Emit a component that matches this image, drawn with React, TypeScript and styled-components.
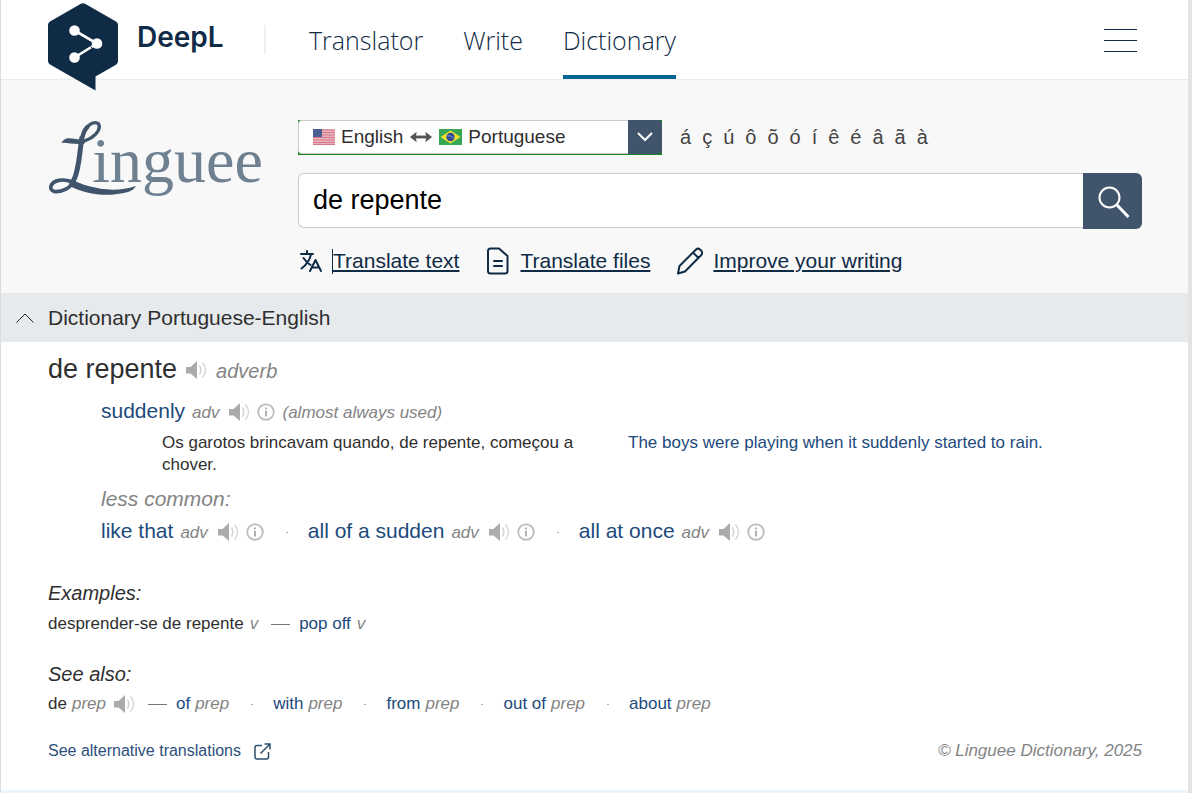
import React from "react";
import styled, { createGlobalStyle } from "styled-components";

const navy = "#0f2b46";
const slate = "#40556b";
const linkBlue = "#1c4a7c";
const grey = "#848484";
const ink = "#2f2f2f";

const GlobalStyle = createGlobalStyle`
  *, *::before, *::after { box-sizing: border-box; }
  body {
    margin: 0;
    background: #e3e3e3;
    color: ${ink};
    font-family: "Liberation Sans", Arial, sans-serif;
    font-size: 17px;
    line-height: 22px;
  }
  a { color: inherit; text-decoration: none; }
  h1, h2, h3, p, ul { margin: 0; padding: 0; font-weight: 400; }
  button { border: 0; padding: 0; background: none; color: inherit; font: inherit; cursor: pointer; }
  svg { display: block; flex: none; }
`;

const Page = styled.div`
  display: flex;
  flex-direction: column;
  min-height: 100vh;
  margin-right: 4px;
  background: #fff;
  border-left: 1px solid #dcdcdc;
`;

const Header = styled.header`
  display: flex;
  height: 80px;
  padding: 0 51px 0 47px;
  border-bottom: 1px solid #ececec;
`;

const Brand = styled.a`
  display: flex;
  align-items: flex-start;
  gap: 19px;
  width: 216px;
  color: ${navy};
`;

const BrandMark = styled.svg`
  position: relative;
  z-index: 1;
  margin-top: 3px;
`;

const BrandName = styled.span`
  padding-top: 20px;
  font: 600 28px/34px Inter, sans-serif;
`;

const Divider = styled.span`
  width: 2px;
  height: 29px;
  margin-top: 25px;
  background: #f0f0f0;
`;

const Nav = styled.nav`
  display: flex;
  flex: 1;
  gap: 40px;
  margin-left: 43px;
`;

const NavLink = styled.a<{ $active?: boolean }>`
  height: 79px;
  padding-top: 23px;
  border-bottom: 4px solid ${(p) => (p.$active ? "#006494" : "transparent")};
  color: ${navy};
  font: 300 25px/34px "Open Sans", sans-serif;
`;

const MenuButton = styled.button`
  display: flex;
  flex-direction: column;
  align-self: flex-start;
  gap: 10px;
  width: 33px;
  margin-top: 29px;
`;

const MenuBar = styled.span`
  height: 1px;
  width: 100%;
  background: ${navy};
`;

const SearchArea = styled.section`
  display: grid;
  grid-template-columns: 214px 1fr;
  column-gap: 36px;
  padding: 40px 46px 18px 47px;
  background: #f8f8f8;
`;

const SearchColumn = styled.form`
  display: flex;
  flex-direction: column;
  min-width: 0;
`;

const LanguageRow = styled.div`
  display: flex;
  align-items: center;
  gap: 18px;
`;

const LanguagePicker = styled.label`
  position: relative;
  display: flex;
  width: 364px;
  height: 35px;
  padding-bottom: 1px;
  background: #14871a;
`;

const LanguageValue = styled.span`
  display: flex;
  flex: 1;
  align-items: center;
  gap: 6px;
  padding-left: 14px;
  border: 1px solid #ccc;
  border-right: 0;
  border-radius: 4px 0 0 4px;
  background: #fff;
  font-size: 19px;
`;

const LanguageArrow = styled.span`
  display: grid;
  place-items: center;
  width: 34px;
  border-radius: 0 4px 4px 0;
  background: ${slate};
`;

const LanguageSelect = styled.select`
  position: absolute;
  inset: 0;
  width: 100%;
  opacity: 0;
  cursor: pointer;
`;

const AccentKeys = styled.div`
  display: flex;
  gap: 11px;
  padding-bottom: 2px;
  color: #444;
  font-size: 20px;
`;

const SearchRow = styled.div`
  display: flex;
  margin-top: 18px;
`;

const SearchInput = styled.input`
  flex: 1;
  min-width: 0;
  height: 55px;
  padding: 0 14px;
  border: 1px solid #ccc;
  border-right: 0;
  border-radius: 6px 0 0 6px;
  background: #fff;
  color: #000;
  font: 27px/34px "Liberation Sans", Arial, sans-serif;
  outline: 0;
`;

const SearchButton = styled.button`
  display: grid;
  place-items: center;
  width: 59px;
  height: 56px;
  padding: 2px 0 0 2px;
  border-radius: 0 6px 6px 0;
  background: ${slate};
`;

const ToolLinks = styled.nav`
  display: flex;
  gap: 27px;
  margin-top: 18px;
  color: ${navy};
  font-size: 21px;
  line-height: 28px;
`;

const ToolLink = styled.a`
  display: flex;
  align-items: center;
  gap: 9px;
`;

const ToolLabel = styled.span<{ $caret?: boolean }>`
  padding-bottom: 1px;
  line-height: 24px;
  border-left: 1px solid ${(p) => (p.$caret ? navy : "transparent")};
  text-decoration: underline;
  text-decoration-thickness: 2px;
  text-underline-offset: 2px;
`;

const SectionBar = styled.h2`
  display: flex;
  align-items: center;
  gap: 14px;
  height: 49px;
  padding-left: 15px;
  background: #e7eaed;
  font-size: 21px;
`;

const Content = styled.main`
  flex: 1;
  padding: 10px 46px 28px 47px;
`;

const Line = styled.div<{ $size?: number; $height?: number; $top?: number }>`
  display: flex;
  flex-wrap: wrap;
  align-items: baseline;
  margin-top: ${(p) => p.$top ?? 0}px;
  font-size: ${(p) => p.$size ?? 17}px;
  line-height: ${(p) => p.$height ?? 22}px;
`;

const Translations = styled.div`
  padding-left: 53px;
`;

const Headword = styled.h1`
  font-size: 27px;
`;

const WordType = styled.em<{ $size?: number }>`
  color: ${grey};
  font-size: ${(p) => p.$size ?? 17}px;
`;

const Entry = styled.span<{ $gap?: number }>`
  display: inline-flex;
  align-items: baseline;
  gap: ${(p) => p.$gap ?? 7}px;
`;

const WordLink = styled.a<{ $source?: boolean }>`
  color: ${(p) => (p.$source ? ink : linkBlue)};
`;

const IconButton = styled.button<{ $spaced?: boolean }>`
  align-self: center;
  margin: 0 0 0 ${(p) => (p.$spaced ? 3 : 0)}px;
`;

const Examples = styled.div`
  display: grid;
  grid-template-columns: 446fr 514fr;
  column-gap: 20px;
  margin-top: 6px;
  padding-left: 61px;
`;

const Example = styled.p<{ $translated?: boolean }>`
  color: ${(p) => (p.$translated ? linkBlue : ink)};
`;

const SubHeading = styled.h3<{ $top: number }>`
  margin-top: ${(p) => p.$top}px;
  font-size: 20px;
  font-style: italic;
  line-height: 24px;
`;

const LessCommon = styled.h3`
  margin-top: 10px;
  color: ${grey};
  font-size: 21px;
  font-style: italic;
  line-height: 26px;
`;

const Dot = styled.span`
  width: 2px;
  height: 1px;
  margin: 0 20px 0 22px;
  align-self: center;
  background: #aaa;
`;

const Dash = styled.span`
  width: 19px;
  height: 1px;
  margin: 0 9px 0 13px;
  align-self: center;
  background: #777;
`;

const Foot = styled.footer`
  display: flex;
  justify-content: space-between;
  margin-top: 25px;
`;

const AltLink = styled.a`
  display: flex;
  align-items: center;
  gap: 13px;
  color: #2d4f7c;
  font-size: 16px;
`;

const NextSection = styled.div`
  height: 3px;
  background: #ebf5fb;
`;

const DeepLMark = () => (
  <BrandMark width="70" height="88" viewBox="0 0 70 88" aria-hidden="true">
    <path d="M2 18.5 32.5 1Q35 -.4 37.500 1L68 18.500Q70 19.700 70 22V58Q70 60.500 68 61.800L47.500 73.500V87.500L2 61.500Q0 60.300 0 58V22Q0 19.700 2 18.500Z" fill={navy} />
    <path d="M26.500 27.500 49 40.500 26.500 54.500" stroke="#fff" strokeWidth="2.600" fill="none" />
    <path d="M42.500 43.500 46.500 48" stroke={navy} strokeWidth="1" />
    <circle cx="26.500" cy="27.500" r="5.300" fill="#fff" />
    <circle cx="49" cy="40.500" r="5.300" fill="#fff" />
    <circle cx="26.500" cy="54.500" r="5.300" fill="#fff" />
  </BrandMark>
);

const LingueeLogo = () => (
  <svg width="214" height="81" viewBox="54 57 642 243" role="img" aria-label="Linguee">
    <g fill="none" stroke={slate} strokeLinecap="round">
      <path d="M163 120C192 110 208 92 208 76C207 61 189 62 177 73C163 86 157 106 154 125" strokeWidth="10" />
      <path d="M172 78C160 90 156 108 154 125" strokeWidth="13" />
      <path d="M155 112C152 135 150 158 146 182C142 207 139 224 131 238" strokeWidth="15" />
      <path d="M131 240C121 262 97 273 75 272C53 268 61 243 86 238C111 234 127 243 151 253" strokeWidth="11" />
    </g>
    <path d="M94 126Q102 112 115 112Q135 113 168 119L162 129Q130 129 110 126Q101 124 94 126Z" fill={slate} />
    <path d="M118 235C170 256 240 281 318 255Q310 269 294 273C233 289 171 282 118 254Z" fill={slate} />
    <text x="187" y="242" fontFamily="'Liberation Serif', serif" fontSize="192" fill="#6f8191">inguee</text>
  </svg>
);

const UsFlag = () => (
  <svg width="22" height="16" viewBox="0 0 22 16" aria-hidden="true">
    <rect width="22" height="16" fill="#e9b3bd" />
    <path d="M0 1H22M0 3.500H22M0 6H22M0 8.500H22M0 11H22M0 13.500H22M0 15.500H22" stroke="#d8798a" />
    <rect width="9" height="8" fill="#4a5f94" />
  </svg>
);

const BrFlag = () => (
  <svg width="23" height="16" viewBox="0 0 23 16" aria-hidden="true">
    <rect width="23" height="16" fill="#36a853" />
    <path d="M11.500 1.500 21.500 8 11.500 14.500 1.500 8Z" fill="#f5e12d" />
    <circle cx="11.500" cy="8" r="4.200" fill="#314a93" />
    <path d="M7.700 6.800Q12 6 15.300 9.500" stroke="#7f97c4" fill="none" />
  </svg>
);

const SwapArrow = () => (
  <svg width="24" height="14" viewBox="0 0 25 14" aria-hidden="true">
    <path d="M5 7H20" stroke="#555" strokeWidth="3" />
    <path d="M1 7 8 1.500 7 7 8 12.500ZM24 7 17 1.500 18 7 17 12.500Z" fill="#555" />
  </svg>
);

const Speaker = ({ spaced = false }: { spaced?: boolean }) => (
  <IconButton type="button" aria-label="Listen" $spaced={spaced}>
    <svg width="21" height="18" viewBox="0 0 21 18">
      <path d="M0 6H4.500L11 0V18L4.500 12.500H0Z" fill="#ababab" />
      <path d="M13.500 4.500Q16 9 13.500 13.500" stroke="#d2d2d2" strokeWidth="1.500" fill="none" />
      <path d="M16.500 1.500Q22.500 9 16.500 16.500" stroke="#d8d8d8" strokeWidth="1.500" fill="none" />
    </svg>
  </IconButton>
);

const Info = () => (
  <IconButton type="button" aria-label="More information">
    <svg width="18" height="18" viewBox="0 0 18 18">
      <circle cx="9" cy="9" r="7.800" fill="none" stroke="#c0c0c0" strokeWidth="1.900" />
      <path d="M9 4.500V6.300M9 7.800V13.500" stroke="#b0b0b0" strokeWidth="2" />
    </svg>
  </IconButton>
);

const TranslateIcon = () => (
  <svg width="25" height="26" viewBox="0 0 25 26" fill="none" stroke={navy} strokeWidth="2" strokeLinecap="round" strokeLinejoin="round" aria-hidden="true">
    <path d="M3 6H15M9 3V6M13 6C12 12 8 17 3.500 20.500M5.500 10C7.500 13 9.500 15 12.500 17" />
    <path d="M12 23 17.500 12 23 23M14 19.500H21" />
  </svg>
);

const FileIcon = () => (
  <svg width="24" height="28" viewBox="0 0 24 28" fill="none" stroke={navy} strokeWidth="2" strokeLinejoin="round" strokeLinecap="round" aria-hidden="true">
    <path d="M4.500 1.500H13L21.500 9V24Q21.500 26.500 19 26.500H4.500Q2 26.500 2 24V4Q2 1.500 4.500 1.500ZM8 14H16M8 19H16" />
  </svg>
);

const PencilIcon = () => (
  <svg width="26" height="28" viewBox="0 0 26 28" fill="none" stroke={navy} strokeWidth="2" strokeLinejoin="round" aria-hidden="true">
    <path d="M1 26.500 2.500 19 19 2.500Q21 .8 23 2.500L24.500 4Q26 6 24.300 8L8 24.500ZM16 5.500 21.500 11" />
  </svg>
);

const AccentList = ["á", "ç", "ú", "ô", "õ", "ó", "í", "ê", "é", "â", "ã", "à"];
const LessCommonWords = ["like that", "all of a sudden", "all at once"];
const Prepositions = ["of", "with", "from", "out of", "about"];

export default function App() {
  return (
    <>
      <GlobalStyle />
      <Page>
        <Header>
          <Brand href="#deepl">
            <DeepLMark />
            <BrandName>DeepL</BrandName>
          </Brand>
          <Divider />
          <Nav>
            <NavLink href="#translator">Translator</NavLink>
            <NavLink href="#write">Write</NavLink>
            <NavLink href="#dictionary" $active>Dictionary</NavLink>
          </Nav>
          <MenuButton type="button" aria-label="Menu">
            <MenuBar />
            <MenuBar />
            <MenuBar />
          </MenuButton>
        </Header>

        <SearchArea>
          <a href="#linguee"><LingueeLogo /></a>
          <SearchColumn onSubmit={(e) => e.preventDefault()}>
            <LanguageRow>
              <LanguagePicker>
                <LanguageValue>
                  <UsFlag />
                  English
                  <SwapArrow />
                  <BrFlag />
                  Portuguese
                </LanguageValue>
                <LanguageArrow>
                  <svg width="16" height="10" viewBox="0 0 16 10" fill="none" stroke="#fff" strokeWidth="2" aria-hidden="true">
                    <path d="M1 1 8 8 15 1" />
                  </svg>
                </LanguageArrow>
                <LanguageSelect aria-label="Languages" defaultValue="pt">
                  <option value="pt">English ↔ Portuguese</option>
                </LanguageSelect>
              </LanguagePicker>
              <AccentKeys>
                {AccentList.map((c) => <button type="button" key={c}>{c}</button>)}
              </AccentKeys>
            </LanguageRow>
            <SearchRow>
              <SearchInput aria-label="Search" defaultValue="de repente" />
              <SearchButton aria-label="Search dictionary">
                <svg width="32" height="32" viewBox="0 0 32 32" fill="none" stroke="#fff" aria-hidden="true">
                  <circle cx="11.500" cy="11.500" r="10" strokeWidth="2" />
                  <path d="M19 19 30.500 31" strokeWidth="3" />
                </svg>
              </SearchButton>
            </SearchRow>
            <ToolLinks>
              <ToolLink href="#text"><TranslateIcon /><ToolLabel $caret>Translate text</ToolLabel></ToolLink>
              <ToolLink href="#files"><FileIcon /><ToolLabel>Translate files</ToolLabel></ToolLink>
              <ToolLink href="#writing"><PencilIcon /><ToolLabel>Improve your writing</ToolLabel></ToolLink>
            </ToolLinks>
          </SearchColumn>
        </SearchArea>

        <SectionBar>
          <svg width="18" height="10" viewBox="0 0 18 10" fill="none" stroke="#222" aria-hidden="true">
            <path d="M.5 9.500 9 1 17.500 9.500" />
          </svg>
          Dictionary Portuguese-English
        </SectionBar>

        <Content>
          <Line $height={34}>
            <Entry $gap={9}>
              <Headword>de repente</Headword>
              <Speaker />
              <WordType $size={20}>adverb</WordType>
            </Entry>
          </Line>

          <Translations>
            <Line $size={21} $height={26} $top={10}>
              <Entry>
                <WordLink href="#suddenly">suddenly</WordLink>
                <WordType>adv</WordType>
                <Speaker spaced />
                <Info />
                <WordType>(almost always used)</WordType>
              </Entry>
            </Line>
            <Examples>
              <Example>Os garotos brincavam quando, de repente, começou a chover.</Example>
              <Example $translated>The boys were playing when it suddenly started to rain.</Example>
            </Examples>
            <LessCommon>less common:</LessCommon>
            <Line $size={21} $height={26} $top={6}>
              {LessCommonWords.map((w, i) => (
                <React.Fragment key={w}>
                  {i > 0 && <Dot />}
                  <Entry>
                    <WordLink href="#word">{w}</WordLink>
                    <WordType>adv</WordType>
                    <Speaker spaced />
                    <Info />
                  </Entry>
                </React.Fragment>
              ))}
            </Line>
          </Translations>

          <SubHeading $top={35}>Examples:</SubHeading>
          <Line $top={8}>
            <Entry $gap={6}>
              <WordLink $source href="#word">desprender-se de repente</WordLink>
              <WordType>v</WordType>
            </Entry>
            <Dash />
            <Entry $gap={6}>
              <WordLink href="#word">pop off</WordLink>
              <WordType>v</WordType>
            </Entry>
          </Line>

          <SubHeading $top={27}>See also:</SubHeading>
          <Line $top={7}>
            <Entry $gap={5}>
              <WordLink $source href="#word">de</WordLink>
              <WordType>prep</WordType>
              <Speaker spaced />
            </Entry>
            <Dash />
            {Prepositions.map((w, i) => (
              <React.Fragment key={w}>
                {i > 0 && <Dot />}
                <Entry $gap={5}>
                  <WordLink href="#word">{w}</WordLink>
                  <WordType>prep</WordType>
                </Entry>
              </React.Fragment>
            ))}
          </Line>

          <Foot>
            <AltLink href="#alternatives">
              See alternative translations
              <svg width="17" height="17" viewBox="0 0 17 17" fill="none" stroke="#2d4f6c" strokeWidth="1.500" aria-hidden="true">
                <path d="M8 2.500H3Q1 2.500 1 4.500V14Q1 16 3 16H12.500Q14.500 16 14.500 14V9M10.500 1H16V6.500M16 1 6.500 10.500" />
              </svg>
            </AltLink>
            <WordType>© Linguee Dictionary, 2025</WordType>
          </Foot>
        </Content>
        <NextSection />
      </Page>
    </>
  );
}
